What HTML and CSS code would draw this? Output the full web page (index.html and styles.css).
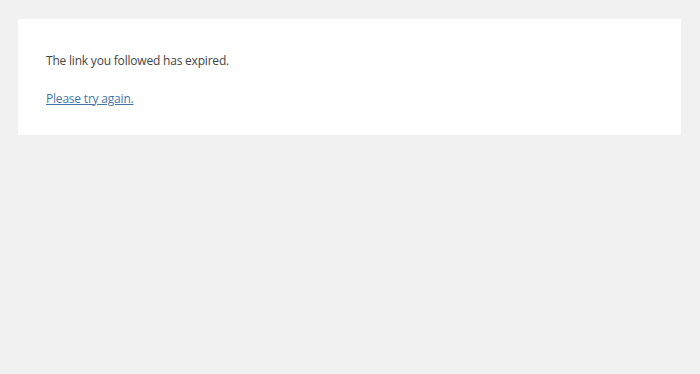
FILE: index.html
```html
<!DOCTYPE html>
<html lang="en-US">
<head>
  <meta charset="UTF-8">
  <title>Something went wrong</title>
  <meta name="viewport" content="width=device-width, initial-scale=1.0">
  <link rel="stylesheet" href="styles.css">
</head>
<body>
  <div id="error-page" class="wp-die-message">
    <p>The link you followed has expired.</p>
    <p><a href="#">Please try again.</a></p>
  </div>
</body>
</html>
```

FILE: styles.css
```css
html {
  background: #f1f1f1;
}
body {
  margin: 19px 19px 0 18px;
  font-family: "Open Sans", "Noto Sans", sans-serif;
  color: #444;
}
.wp-die-message {
  background: #fff;
  padding: 14px 28px 9px;
  box-shadow: 0 1px 2px rgba(0, 0, 0, 0.1);
}
.wp-die-message p {
  font-size: 12px;
  letter-spacing: -0.2px;
  line-height: 19.5px;
  margin: 18px 0;
}
a {
  color: #4674aa;
}
```
